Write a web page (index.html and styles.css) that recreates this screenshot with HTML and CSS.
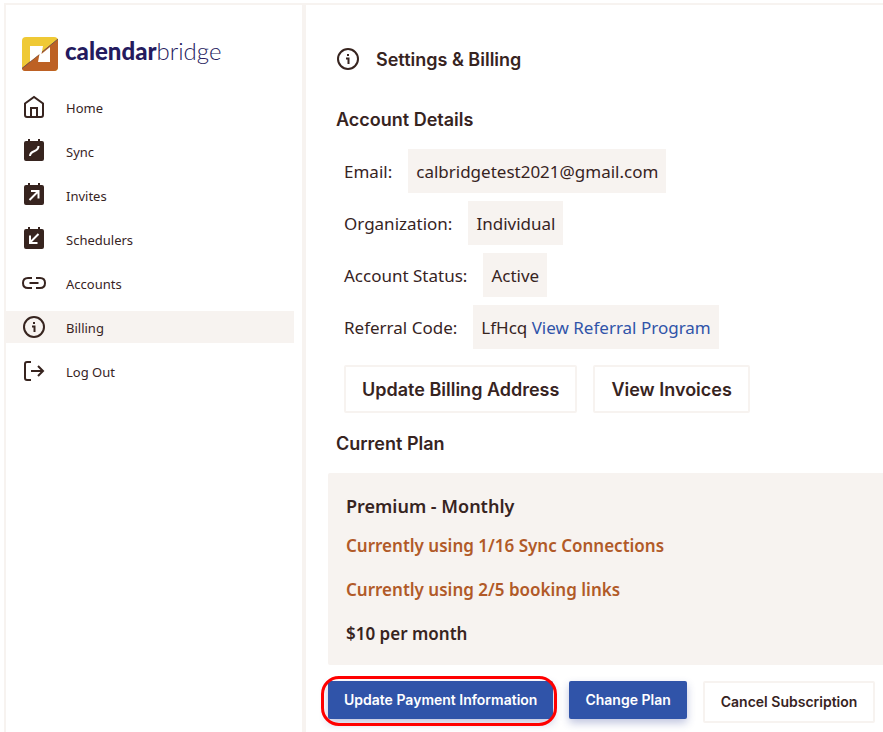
FILE: index.html
```html
<!DOCTYPE html>
<html lang="en">
<head>
<meta charset="utf-8">
<title>Settings &amp; Billing - calendarbridge</title>
<link rel="stylesheet" href="styles.css">
</head>
<body>
<div class="app">
  <aside class="sidebar">
    <a class="brand" href="#">
      <svg class="brand-mark" viewBox="0 0 36 34" aria-hidden="true">
        <rect width="36" height="34" rx="4" fill="#efc935"/>
        <path d="M36 2V30a4 4 0 0 1-4 4H3q-3 0-3-3Z" fill="#bd6124"/>
        <path d="M36 2 0 31.500" stroke="#765449" stroke-width="1"/>
        <path d="M8 9H21L19.500 17 28 10V25H16L17.500 17 8 24.500Z" fill="#fff"/>
      </svg>
      <span class="brand-name"><b>calendar</b>bridge</span>
    </a>
    <nav class="nav">
      <a class="nav-item" href="#">
        <svg class="icon" viewBox="0 0 24 24" aria-hidden="true"><path d="M3 8.500 12 2l9 6.500V20q0 2-2 2H5q-2 0-2-2ZM9 22v-9h6v9"/></svg>
        <span>Home</span>
      </a>
      <a class="nav-item" href="#">
        <svg class="icon" viewBox="0 0 24 24" aria-hidden="true"><path class="solid" d="M4 2H6V0H8V2H16V0H18V2H20Q22 2 22 4V20Q22 22 20 22H4Q2 22 2 20V4Q2 2 4 2Z"/><path class="cut" d="M8 17C8 10.500 16.500 14 16.500 7"/></svg>
        <span>Sync</span>
      </a>
      <a class="nav-item" href="#">
        <svg class="icon" viewBox="0 0 24 24" aria-hidden="true"><path class="solid" d="M4 2H6V0H8V2H16V0H18V2H20Q22 2 22 4V20Q22 22 20 22H4Q2 22 2 20V4Q2 2 4 2Z"/><path class="cut" d="M7.500 17 16 8.500M9 8H16.500V15.500"/></svg>
        <span>Invites</span>
      </a>
      <a class="nav-item" href="#">
        <svg class="icon" viewBox="0 0 24 24" aria-hidden="true"><path class="solid" d="M4 2H6V0H8V2H16V0H18V2H20Q22 2 22 4V20Q22 22 20 22H4Q2 22 2 20V4Q2 2 4 2Z"/><path class="cut" d="M16.500 7 8 15.500M8 8.500V16H15.500"/></svg>
        <span>Schedulers</span>
      </a>
      <a class="nav-item" href="#">
        <svg class="icon" viewBox="0 0 24 24" aria-hidden="true"><path d="M10 7H6Q1 7 1 12T6 17H10M14 7H18Q23 7 23 12T18 17H14M7.500 12H16.500"/></svg>
        <span>Accounts</span>
      </a>
      <a class="nav-item active" href="#" aria-current="page">
        <svg class="icon" viewBox="0 0 24 24" aria-hidden="true"><circle cx="12" cy="12" r="10"/><path d="M10 11.500H12.500V17M12 7V9"/></svg>
        <span>Billing</span>
      </a>
      <a class="nav-item" href="#">
        <svg class="icon" viewBox="0 0 24 24" aria-hidden="true"><path d="M9 3H5Q3 3 3 5V19Q3 21 5 21H9M9 12H21M16 7 21 12 16 17"/></svg>
        <span>Log Out</span>
      </a>
    </nav>
  </aside>
  <main class="main">
    <header class="title">
      <svg class="icon" viewBox="0 0 24 24" aria-hidden="true"><circle cx="12" cy="12" r="10"/><path d="M10 11.500H12.500V17M12 7V9"/></svg>
      <h1 class="heading">Settings &amp; Billing</h1>
    </header>
    <h2 class="heading section">Account Details</h2>
    <dl class="details">
      <div class="detail"><dt>Email:</dt><dd>calbridgetest2021@gmail.com</dd></div>
      <div class="detail"><dt>Organization:</dt><dd>Individual</dd></div>
      <div class="detail"><dt>Account Status:</dt><dd>Active</dd></div>
      <div class="detail"><dt>Referral Code:</dt><dd>LfHcq <a href="#">View Referral Program</a></dd></div>
    </dl>
    <div class="account-actions">
      <button class="btn large" type="button">Update Billing Address</button>
      <button class="btn large" type="button">View Invoices</button>
    </div>
    <h2 class="heading section">Current Plan</h2>
    <section class="plan">
      <h3 class="plan-name">Premium - Monthly</h3>
      <p class="usage">Currently using 1/16 Sync Connections</p>
      <p class="usage">Currently using 2/5 booking links</p>
      <p>$10 per month</p>
    </section>
    <div class="plan-actions">
      <button class="btn primary highlighted" type="button">Update Payment Information</button>
      <button class="btn primary" type="button">Change Plan</button>
      <button class="btn" type="button">Cancel Subscription</button>
    </div>
  </main>
</div>
</body>
</html>
```
FILE: styles.css
```css
* { box-sizing: border-box; }
body {
  margin: 0;
  padding: 3px 0 0 4px;
  background: #fff;
  color: #37241f;
  font-family: "Noto Sans", sans-serif;
}
h1, h2, h3, p, dl, dd { margin: 0; }
a { color: #3054a9; text-decoration: none; }
.app {
  display: flex;
  min-height: calc(100vh - 3px);
  border: solid #f7f3f0;
  border-width: 2px 0 0 2px;
}
.sidebar {
  flex: 0 0 300px;
  padding: 32px 8px 0 0;
  border-right: 4px solid #f7f3f0;
}
.brand {
  display: flex;
  align-items: center;
  gap: 7px;
  padding-left: 16px;
  color: #241a5e;
}
.brand-mark { width: 36px; height: 34px; }
.brand-name {
  font: 300 24px/28px Lato, sans-serif;
  padding-bottom: 6px;
}
.brand-name b { font-weight: 900; }
.nav {
  display: flex;
  flex-direction: column;
  gap: 12px;
  margin-top: 20px;
}
.nav-item {
  display: flex;
  align-items: center;
  gap: 20px;
  height: 32px;
  padding-left: 16px;
  color: inherit;
  font-size: 13px;
}
.nav-item span { padding-top: 2px; }
.active { background: #f7f3f0; }
.icon {
  width: 24px;
  height: 24px;
  fill: none;
  stroke: #37241f;
  stroke-width: 2;
}
.icon .solid { fill: #37241f; stroke: none; }
.icon .cut { stroke: #fff; }
.main {
  flex: 1;
  min-width: 0;
  padding: 41px 0 0 22px;
}
.title {
  display: flex;
  align-items: center;
  gap: 16px;
  padding-left: 8px;
}
.heading {
  padding-top: 2px;
  font: 600 18px/24px Inter, sans-serif;
}
.section { padding-left: 8px; }
.title + .section { margin-top: 34px; }
.details {
  display: grid;
  gap: 8px;
  margin-top: 17px;
  padding-left: 16px;
  font-size: 17px;
  line-height: 28px;
}
.detail {
  display: flex;
  align-items: center;
  gap: 16px;
}
.detail dt { padding-top: 2px; }
.detail dd {
  padding: 9px 8px 7px;
  background: #f7f3f0;
}
.account-actions {
  display: flex;
  gap: 16px;
  margin: 16px 0 17px;
  padding-left: 16px;
}
.btn {
  padding: 9px 16px;
  border: 2px solid #f7f3f0;
  border-radius: 2px;
  background: #fff;
  color: #37241f;
  font: 600 14px/20px Inter, sans-serif;
  white-space: nowrap;
}
.btn.large {
  padding: 11px 16px 9px;
  font-size: 18px;
  line-height: 24px;
}
.btn.primary {
  position: relative;
  padding: 9px 16px;
  border: 0;
  background: #3054a9;
  color: #fff;
  box-shadow: 0 4px 8px rgba(48, 64, 150, .3);
}
.highlighted::after {
  content: "";
  position: absolute;
  inset: -5px -4px -7px -7px;
  border: 3px solid #f00;
  border-radius: 18px;
}
.plan {
  display: grid;
  gap: 16px;
  margin-top: 17px;
  padding: 19px 18px 17px;
  border-radius: 2px 0 0 2px;
  background: #f7f3f0;
  font-size: 17px;
  font-weight: 600;
  line-height: 28px;
}
.plan-name {
  margin-bottom: -4px;
  font-size: 18px;
  font-weight: 600;
}
.usage { color: #b15a28; }
.plan-actions {
  display: flex;
  align-items: flex-start;
  gap: 16px;
  margin-top: 16px;
}
```
